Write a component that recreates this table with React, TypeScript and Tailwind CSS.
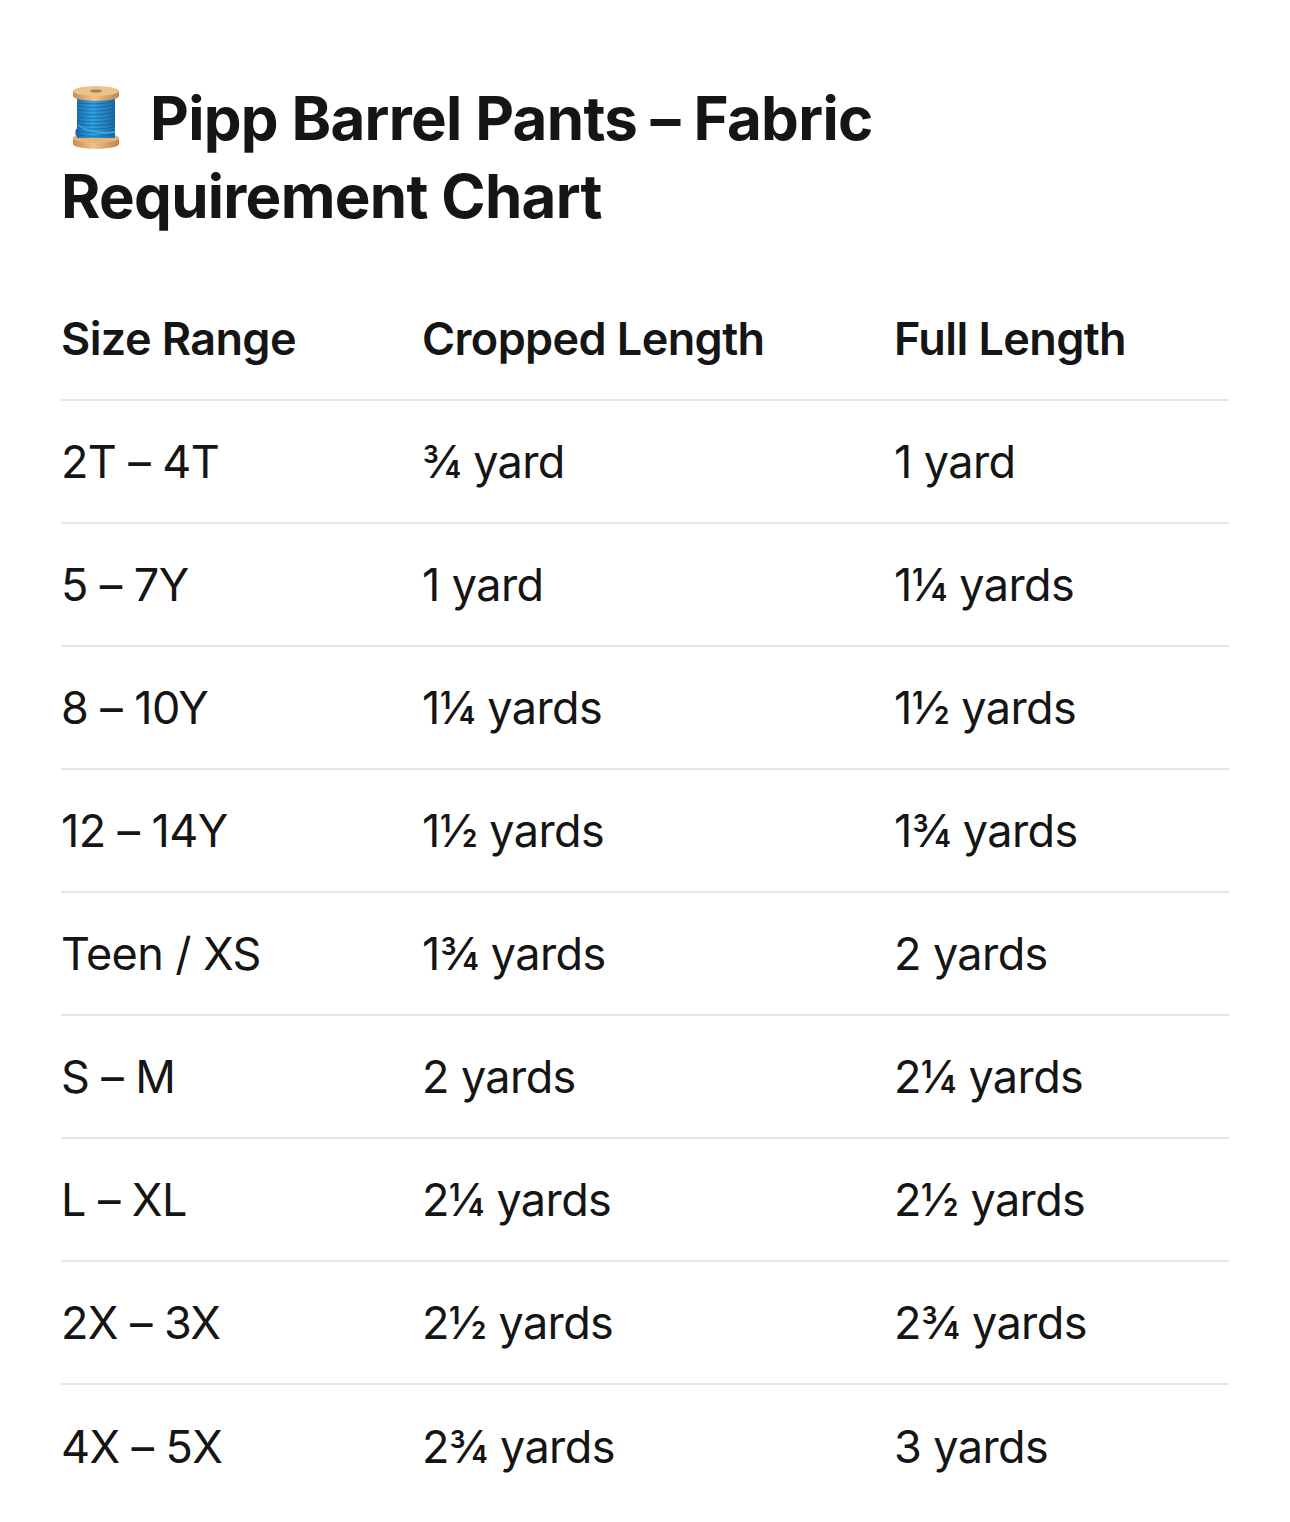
import React from 'react'

const rows: [string, string, string][] = [
	['2T – 4T', '¾ yard', '1 yard'],
	['5 – 7Y', '1 yard', '1¼ yards'],
	['8 – 10Y', '1¼ yards', '1½ yards'],
	['12 – 14Y', '1½ yards', '1¾ yards'],
	['Teen / XS', '1¾ yards', '2 yards'],
	['S – M', '2 yards', '2¼ yards'],
	['L – XL', '2¼ yards', '2½ yards'],
	['2X – 3X', '2½ yards', '2¾ yards'],
	['4X – 5X', '2¾ yards', '3 yards'],
]

function Spool() {
	return (
		<svg width="48" height="65" viewBox="0 0 48 65" className="ml-[11px] mr-[30px] inline-block align-[-10px]">
			<defs>
				<linearGradient id="wood" x1="0" x2="1" y1="0" y2="0">
					<stop offset="0" stopColor="#c98c4c" />
					<stop offset="0.45" stopColor="#eec28a" />
					<stop offset="1" stopColor="#c3854a" />
				</linearGradient>
				<linearGradient id="thread" x1="0" x2="1" y1="0" y2="0">
					<stop offset="0" stopColor="#1c6fb0" />
					<stop offset="0.4" stopColor="#2fa3e0" />
					<stop offset="1" stopColor="#1a6aa8" />
				</linearGradient>
			</defs>
			{/* bottom flange */}
			<path d="M1 53 L1 59 A23 5 0 0 0 47 59 L47 53 Z" fill="url(#wood)" />
			<ellipse cx="24" cy="53" rx="23" ry="5" fill="#e6b47a" />
			{/* thread */}
			<rect x="5" y="11" width="38" height="42" fill="url(#thread)" />
			{Array.from({ length: 11 }).map((_, i) => (
				<path
					key={i}
					d={`M5 ${14 + i * 3.6} Q24 ${17 + i * 3.6} 43 ${13 + i * 3.6}`}
					stroke="#15588f"
					strokeWidth="0.9"
					fill="none"
					opacity="0.7"
				/>
			))}
			<path d="M6 40 Q20 50 43 47" stroke="#38b0ec" strokeWidth="1.4" fill="none" />
			<path d="M5 44 Q3 50 7 52" stroke="#1a6aa8" strokeWidth="2" fill="none" />
			{/* top flange */}
			<path d="M1 6 L1 11 A23 5 0 0 0 47 11 L47 6 Z" fill="url(#wood)" />
			<ellipse cx="24" cy="6" rx="23" ry="5" fill="#ecc18a" />
			<ellipse cx="24" cy="6" rx="6" ry="1.6" fill="#b57b3f" />
		</svg>
	)
}

export default function App() {
	return (
		<div
			className="min-h-[1522px] bg-white px-[61px] pt-[79px] text-[#151515]"
			style={{ fontFamily: 'Inter, "Noto Sans", sans-serif' }}
		>
			<h1 className="text-[60px] font-bold leading-[78px] tracking-[-0.7px]">
				<Spool />
				Pipp Barrel Pants – Fabric
				<br />
				Requirement Chart
			</h1>

			<div className="mt-[43px] tracking-[-0.6px]">
				<div className="grid h-[123px] grid-cols-[361px_472px_1fr] items-center border-b-2 border-[#e6e6e6] text-[45px] font-semibold">
					<div>Size Range</div>
					<div>Cropped Length</div>
					<div>Full Length</div>
				</div>
				{rows.map((r, i) => (
					<div
						key={r[0]}
						className={`grid h-[123px] grid-cols-[361px_472px_1fr] items-center text-[45px] font-normal ${
							i < rows.length - 1 ? 'border-b-2 border-[#e6e6e6]' : ''
						}`}
					>
						<div>{r[0]}</div>
						<div>{r[1]}</div>
						<div>{r[2]}</div>
					</div>
				))}
			</div>
		</div>
	)
}
